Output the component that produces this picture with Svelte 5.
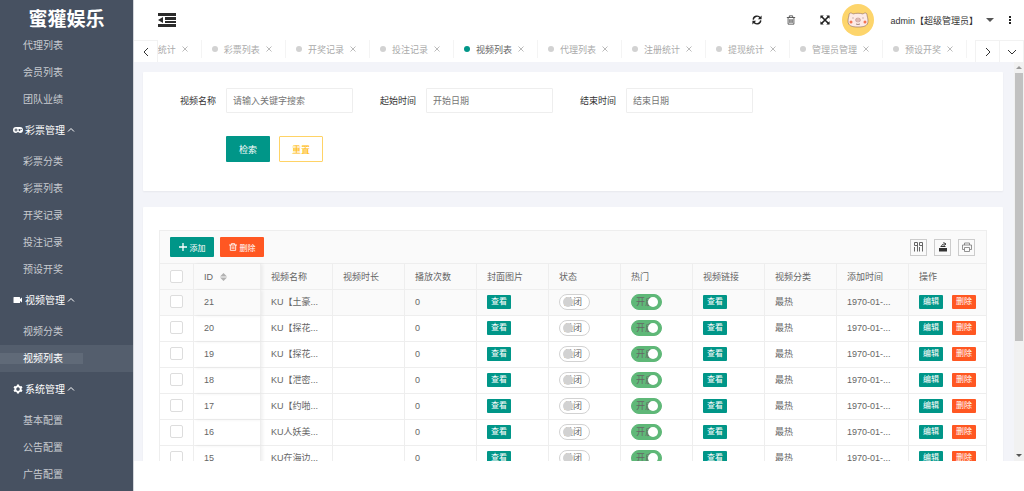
<script>
	const menu = [
		{ title: '', items: ['代理列表', '会员列表', '团队业绩'] },
		{ title: '彩票管理', icon: 'game', items: ['彩票分类', '彩票列表', '开奖记录', '投注记录', '预设开奖'] },
		{ title: '视频管理', icon: 'video', items: ['视频分类', '视频列表'] },
		{ title: '系统管理', icon: 'gear', items: ['基本配置', '公告配置', '广告配置'] }
	];

	const tabs = ['统计', '彩票列表', '开奖记录', '投注记录', '视频列表', '代理列表', '注册统计', '提现统计', '管理员管理', '预设开奖'];

	const fields = [
		{ id: 'name', label: '视频名称', placeholder: '请输入关键字搜索' },
		{ id: 'start', label: '起始时间', placeholder: '开始日期' },
		{ id: 'end', label: '结束时间', placeholder: '结束日期' }
	];

	const columns = ['视频名称', '视频时长', '播放次数', '封面图片', '状态', '热门', '视频链接', '视频分类', '添加时间'];

	const rows = [
		{ id: 21, name: 'KU【土豪...' },
		{ id: 20, name: 'KU【探花...' },
		{ id: 19, name: 'KU【探花...' },
		{ id: 18, name: 'KU【泄密...' },
		{ id: 17, name: 'KU【约啪...' },
		{ id: 16, name: 'KU人妖美...' },
		{ id: 15, name: 'KU在海边...' }
	];

	let current = $state('视频列表');
</script>

<div class="layout">
	<nav class="sidebar">
		<div class="logo">蜜獾娱乐</div>
		{#each menu as group}
			{#if group.title}
				<button class="group-title">
					<svg width="10" height="10" viewBox="0 0 20 20" fill="#fff">
						{#if group.icon === 'game'}
							<path fill-rule="evenodd" d="M6 4h8a6 6 0 0 1 0 12c-2 0-2.500-2-4-2s-2 2-4 2A6 6 0 0 1 6 4zM5 7v2H3v2h2v2h2v-2h2V9H7V7zM13 8a2 2 0 1 0 .1 0zM16.500 8a1 1 0 1 0 .1 0z" />
						{:else if group.icon === 'video'}
							<path d="M2 4h11a1 1 0 0 1 1 1v3l4-3v10l-4-3v3a1 1 0 0 1-1 1H2a1 1 0 0 1-1-1V5a1 1 0 0 1 1-1z" />
						{:else}
							<path fill-rule="evenodd" d="M8 1h4l.6 2.600 1.800 1L17 4l2 3.500-2 1.700v1.600l2 1.700-2 3.500-2.600-.6-1.800 1L12 19H8l-.6-2.600-1.800-1L3 16l-2-3.500 2-1.700V9.200L1 7.500 3 4l2.600.6 1.800-1zM10 6.500a3.500 3.500 0 1 0 .1 0z" />
						{/if}
					</svg>
					{group.title}
					<svg class="caret" width="8" height="8" viewBox="0 0 8 8" fill="none" stroke="#fff"><path d="M1 5.500 4 2.500l3 3" /></svg>
				</button>
			{/if}
			<ul class="items">
				{#each group.items as item}
					<li class:active={item === '视频列表'}><a href="#{item}"><span>{item}</span></a></li>
				{/each}
			</ul>
		{/each}
	</nav>

	<div class="main">
		<header class="header">
			<button class="icon-button" aria-label="收起菜单">
				<svg width="18" height="14" viewBox="0 0 18 14" fill="#2b2b2b">
					<path d="M0 0h18v3H0zM7 4h11v3H7zM7 8h11v2H7zM0 11h18v3H0zM5 4v6L0 7z" />
				</svg>
			</button>
			<div class="tools">
				<button class="icon-button" aria-label="刷新">
					<svg width="10" height="10" viewBox="0 0 12 12" fill="none" stroke="#222" stroke-width="1.700">
						<path d="M1.500 5.500a4.500 4.500 0 0 1 8.300-2M10.500 6.500a4.500 4.500 0 0 1-8.300 2" />
						<path d="M11.500.5v4.500H7zM.5 11.500V7H5z" fill="#222" stroke="none" />
					</svg>
				</button>
				<button class="icon-button" aria-label="清除">
					<svg width="10" height="10" viewBox="0 0 12 12" fill="none" stroke="#444">
						<path d="M1 3h10M4 3V1h4v2M2.500 3v8h7V3M4.500 5v4.500M6 5v4.500M7.500 5v4.500" />
					</svg>
				</button>
				<button class="icon-button" aria-label="全屏">
					<svg width="10" height="10" viewBox="0 0 12 12" fill="#222">
						<path d="M1.500 1.500l9 9M10.500 1.500l-9 9" stroke="#222" stroke-width="2" />
						<path d="M.5.500h4l-4 4zM11.500.500v4l-4-4zM.5 11.500v-4l4 4zM11.500 11.500h-4l4-4z" />
					</svg>
				</button>
			</div>
			<svg class="avatar" width="32" height="32" viewBox="0 0 32 32">
				<circle cx="16" cy="16" r="16" fill="#fdd56c" />
				<path d="M7 11c0-3 3-2 4-1 3-1 7-1 10 0 1-1 4-2 4 1 0 1 1 3 1 6 0 5-4 6-10 6S6 22 6 17c0-3 1-5 1-6z" fill="#fdeae6" stroke="#8b6a60" stroke-width=".6" />
				<ellipse cx="16" cy="16" rx="2.500" ry="2" fill="#f6cfc9" stroke="#a47a70" stroke-width=".5" />
				<path d="M15 15.500v1M17 15.500v1M11 13.500v1M21 13.500v1M14 20q2 1 4 0" stroke="#7b5a50" stroke-width=".7" fill="none" />
				<circle cx="9" cy="18" r="1.500" fill="#f5734f" />
				<circle cx="23" cy="18" r="1.500" fill="#f5734f" />
			</svg>
			<button class="user">admin【超级管理员】 <i></i></button>
			<button class="icon-button" aria-label="更多">
				<svg width="4" height="10" viewBox="0 0 4 10" fill="#222"><path d="M1 1h2v2H1zM1 4h2v2H1zM1 7h2v2H1z" /></svg>
			</button>
		</header>

		<div class="tab-bar">
			<button class="tab-arrow" aria-label="向左">
				<svg width="10" height="10" viewBox="0 0 10 10" fill="none" stroke="#333"><path d="M7 1 3 5l4 4" /></svg>
			</button>
			<div class="tabs">
				{#each tabs as tab}
					<div class="tab" class:active={current === tab}>
						<i class="dot"></i>
						<button class="tab-name" onclick={() => (current = tab)}>{tab}</button>
						<button class="tab-close" aria-label="关闭{tab}">
							<svg width="6" height="6" viewBox="0 0 6 6" stroke="#aaa" stroke-width=".8"><path d="M.5.500l5 5M5.500.500l-5 5" /></svg>
						</button>
					</div>
				{/each}
			</div>
			<button class="tab-arrow" aria-label="向右">
				<svg width="10" height="10" viewBox="0 0 10 10" fill="none" stroke="#333"><path d="M3 1l4 4-4 4" /></svg>
			</button>
			<button class="tab-arrow" aria-label="标签操作">
				<svg width="10" height="10" viewBox="0 0 10 10" fill="none" stroke="#333"><path d="M1 3l4 4 4-4" /></svg>
			</button>
		</div>

		<div class="frame">
			<div class="content">
				<form class="card search">
					<div class="fields">
						{#each fields as field}
							<div class="field">
								<label for={field.id}>{field.label}</label>
								<input type="text" id={field.id} placeholder={field.placeholder} />
							</div>
						{/each}
					</div>
					<div class="actions">
						<button type="button" class="btn">检索</button>
						<button type="reset" class="btn outline">重置</button>
					</div>
				</form>

				<div class="card list">
					<div class="toolbar">
						<button class="btn small">
							<svg width="8" height="8" viewBox="0 0 8 8" stroke="#fff" stroke-width="1.300"><path d="M4 0v8M0 4h8" /></svg>
							添加
						</button>
						<button class="btn small danger">
							<svg width="8" height="8" viewBox="0 0 12 12" fill="none" stroke="#fff" stroke-width="1.300"><path d="M0 3h12M3.500 3V1h5v2M2 3v8h8V3M4.700 5v4M7.300 5v4" /></svg>
							删除
						</button>
						<div class="table-tools">
							<button aria-label="筛选列">
								<svg width="10" height="10" viewBox="0 0 10 10" fill="none" stroke="#666"><path d="M.5.500h3v3h-3zM5.500.500h3v3h-3zM.5 5v4.500M3.500 3v6.500M5.500 5v4.500M8.500 3v6.500" /></svg>
							</button>
							<button aria-label="导出">
								<svg width="10" height="10" viewBox="0 0 10 10" fill="#333"><path d="M1 6h8v3.500H1zM2 5l1-1h4l1 1z" /><path d="M3.500 5c0-2 1-3 3-3M5.500.5 8 2 5.500 3.800" fill="none" stroke="#333" /></svg>
							</button>
							<button aria-label="打印">
								<svg width="10" height="10" viewBox="0 0 10 10" fill="none" stroke="#777" stroke-width=".8"><path d="M2.500 3V1h5v2M2.500 7.500h-2V3h9v4.500h-2M2.500 5.500h5v4h-5z" /></svg>
							</button>
						</div>
					</div>
					<table>
						<colgroup>
							<col class="col-check" />
							<col class="col-id" />
							{#each columns as column}
								<col class="col-data" />
							{/each}
							<col />
						</colgroup>
						<thead>
							<tr>
								<th><input type="checkbox" aria-label="全选" /></th>
								<th class="fixed">
									ID
									<svg class="sort" width="7" height="8" viewBox="0 0 7 8" fill="#b2b2b2"><path d="M3.500 0 7 3.500H0zM0 4.500h7L3.500 8z" /></svg>
								</th>
								{#each columns as column}
									<th>{column}</th>
								{/each}
								<th>操作</th>
							</tr>
						</thead>
						<tbody>
							{#each rows as row, i}
								<tr class:hover={i === 0}>
									<td><input type="checkbox" aria-label="选择 {row.id}" /></td>
									<td class="fixed">{row.id}</td>
									<td>{row.name}</td>
									<td></td>
									<td>0</td>
									<td><button class="btn mini">查看</button></td>
									<td><label class="switch"><input type="checkbox" /><span>关闭</span><i></i></label></td>
									<td><label class="switch"><input type="checkbox" checked /><span>开启</span><i></i></label></td>
									<td><button class="btn mini">查看</button></td>
									<td>最热</td>
									<td>1970-01-...</td>
									<td>
										<div class="ops">
											<button class="btn mini">编辑</button>
											<button class="btn mini danger">删除</button>
										</div>
									</td>
								</tr>
							{/each}
						</tbody>
					</table>
				</div>
			</div>
			<div class="scrollbar" aria-hidden="true">
				<i class="up"></i>
				<div class="track"><div class="thumb"></div></div>
				<i class="down"></i>
			</div>
		</div>
	</div>
</div>

<style>
	:global(body) {
		background: #fff;
	}

	.layout {
		display: flex;
		height: 100vh;
		overflow: hidden;
		font-family: 'Liberation Sans', 'Noto Sans CJK SC', sans-serif;
		font-size: 9px;
		color: #666;
	}

	.layout * {
		box-sizing: border-box;
	}

	button,
	input {
		margin: 0;
		padding: 0;
		border: 0;
		background: none;
		font: inherit;
		color: inherit;
	}

	button {
		cursor: pointer;
	}

	svg {
		display: block;
		flex: none;
	}

	.sidebar {
		flex: none;
		width: 133px;
		overflow: hidden;
		background: #475161;
		font-size: 10px;
	}

	.logo {
		height: 32px;
		line-height: 40px;
		font-size: 19px;
		font-weight: bold;
		text-align: center;
		color: #fff;
	}

	.group-title {
		display: flex;
		align-items: center;
		gap: 2px;
		width: 100%;
		height: 27px;
		margin-bottom: 5px;
		padding-left: 13px;
		color: #fff;
	}

	.items {
		margin: 0 0 3px;
		padding: 0;
		list-style: none;
	}

	.items a {
		display: flex;
		align-items: center;
		height: 27px;
		color: #c8cbd0;
		text-decoration: none;
	}

	.items span {
		padding: 0 20px 0 23px;
		line-height: 11px;
	}

	.items .active a {
		background: #545e6d;
		color: #fff;
	}

	.items .active span {
		background: #606a78;
	}

	.main {
		flex: 1;
		min-width: 0;
		display: flex;
		flex-direction: column;
		padding-bottom: 30px;
		border-left: 1px solid #d3d6db;
	}

	.header {
		flex: none;
		display: flex;
		align-items: center;
		height: 40px;
		padding: 0 12px 0 24px;
		color: #333;
	}

	.tools {
		display: flex;
		gap: 24px;
		margin: 0 12px 0 auto;
	}

	.user {
		display: flex;
		align-items: center;
		gap: 8px;
		margin: 0 14px 0 16px;
	}

	.user i {
		border: 4px solid transparent;
		border-top-color: #555;
		border-bottom: 0;
	}

	.tab-bar {
		flex: none;
		display: flex;
		height: 22px;
	}

	.tab-arrow {
		flex: none;
		display: flex;
		align-items: center;
		justify-content: center;
		width: 24px;
		border: 1px solid #f2f2f2;
		border-width: 1px 1px 0 0;
	}

	.tabs {
		flex: 1;
		min-width: 0;
		display: flex;
		justify-content: flex-end;
		overflow: hidden;
		padding-right: 8px;
		border-right: 1px solid #f2f2f2;
	}

	.tab {
		flex: none;
		display: flex;
		align-items: center;
		height: 18px;
		padding: 0 13px 0 10px;
		border-right: 1px solid #f4f4f4;
		color: #aaa;
	}

	.dot {
		width: 6px;
		height: 6px;
		margin-right: 6px;
		border-radius: 50%;
		background: #d2d2d2;
	}

	.tab-close {
		margin-left: 6px;
	}

	.tab.active {
		color: #666;
	}

	.tab.active .dot {
		background: #009688;
	}

	.frame {
		flex: 1;
		min-height: 0;
		display: flex;
		background: #f3f4f9;
	}

	.content {
		flex: 1;
		min-width: 0;
		overflow: hidden;
		padding: 10px 11px 0 9px;
	}

	.card {
		margin-bottom: 16px;
		border-radius: 1px;
		background: #fff;
		box-shadow: 0 1px 2px rgba(0, 0, 0, 0.05);
	}

	.search {
		padding: 16px 10px 29px;
	}

	.fields {
		display: flex;
		flex-wrap: wrap;
	}

	.field {
		display: flex;
		align-items: center;
		gap: 10px;
	}

	.field label {
		width: 63px;
		text-align: right;
		color: #333;
	}

	.field input {
		width: 127px;
		height: 25px;
		padding: 0 6px;
		border: 1px solid #eee;
		border-radius: 1px;
		background: #fff;
	}

	.field input::placeholder {
		color: #757575;
	}

	.actions {
		display: flex;
		gap: 9px;
		margin: 23px 0 0 73px;
	}

	.btn {
		display: flex;
		align-items: center;
		justify-content: center;
		width: 44px;
		height: 26px;
		border-radius: 1px;
		background: #009688;
		color: #fff;
	}

	.btn.outline {
		border: 1px solid #ffd366;
		background: #fff;
		color: #ffb800;
	}

	.btn.small {
		gap: 3px;
		height: 20px;
		font-size: 8px;
	}

	.btn.mini {
		width: 24px;
		height: 14px;
		font-size: 8px;
		line-height: 14px;
	}

	.btn.danger {
		background: #ff5722;
	}

	.list {
		padding: 23px 16px 16px;
	}

	.toolbar {
		display: flex;
		align-items: center;
		gap: 6px;
		height: 33px;
		padding: 0 11px 0 10px;
		border: 1px solid #eee;
		border-bottom: 0;
		background: #fafafa;
	}

	.table-tools {
		display: flex;
		gap: 7px;
		margin-left: auto;
	}

	.table-tools button {
		display: flex;
		align-items: center;
		justify-content: center;
		width: 17px;
		height: 17px;
		border: 1px solid #ccc;
	}

	table {
		width: 100%;
		table-layout: fixed;
		border-collapse: separate;
		border-spacing: 0;
		border: 1px solid #eee;
		border-width: 1px 0 0 1px;
	}

	.col-check {
		width: 34px;
	}

	.col-id {
		width: 67px;
	}

	.col-data {
		width: 72px;
	}

	th,
	td {
		height: 26px;
		padding: 0 0 0 10px;
		border: 1px solid #eee;
		border-width: 0 1px 1px 0;
		font-weight: normal;
		text-align: left;
		white-space: nowrap;
	}

	td {
		padding-bottom: 2px;
	}

	thead,
	.hover {
		background: #fafafa;
	}

	.fixed {
		box-shadow: 2px 0 3px rgba(0, 0, 0, 0.06);
	}

	.sort {
		display: inline-block;
		margin-left: 4px;
		vertical-align: middle;
	}

	th > input,
	td > input {
		display: block;
		appearance: none;
		width: 13px;
		height: 13px;
		border: 1px solid #ddd;
		border-radius: 2px;
		background: #fff;
	}

	.switch {
		position: relative;
		display: flex;
		align-items: center;
		width: 31px;
		height: 16px;
		padding-left: 4px;
		border: 1px solid #d2d2d2;
		border-radius: 8px;
		background: #fff;
	}

	.switch:has(:checked) {
		border-color: #5fb878;
		background: #5fb878;
	}

	.switch input {
		position: absolute;
		opacity: 0;
	}

	.switch i {
		position: absolute;
		top: 2px;
		left: 3px;
		width: 10px;
		height: 10px;
		border-radius: 50%;
		background: #d2d2d2;
	}

	.switch :checked ~ i {
		left: 16px;
		background: #fff;
	}

	.ops {
		display: flex;
		gap: 9px;
	}

	.scrollbar {
		flex: none;
		display: flex;
		flex-direction: column;
		align-items: center;
		width: 10px;
		padding: 4px 0;
		background: #f1f1f1;
	}

	.up,
	.down {
		border: 3px solid transparent;
	}

	.up {
		border-top: 0;
		border-bottom-color: #999;
	}

	.down {
		border-bottom: 0;
		border-top-color: #555;
	}

	.track {
		flex: 1;
		width: 100%;
		padding: 4px 1px;
	}

	.thumb {
		height: 71%;
		background: #c1c1c1;
	}
</style>
